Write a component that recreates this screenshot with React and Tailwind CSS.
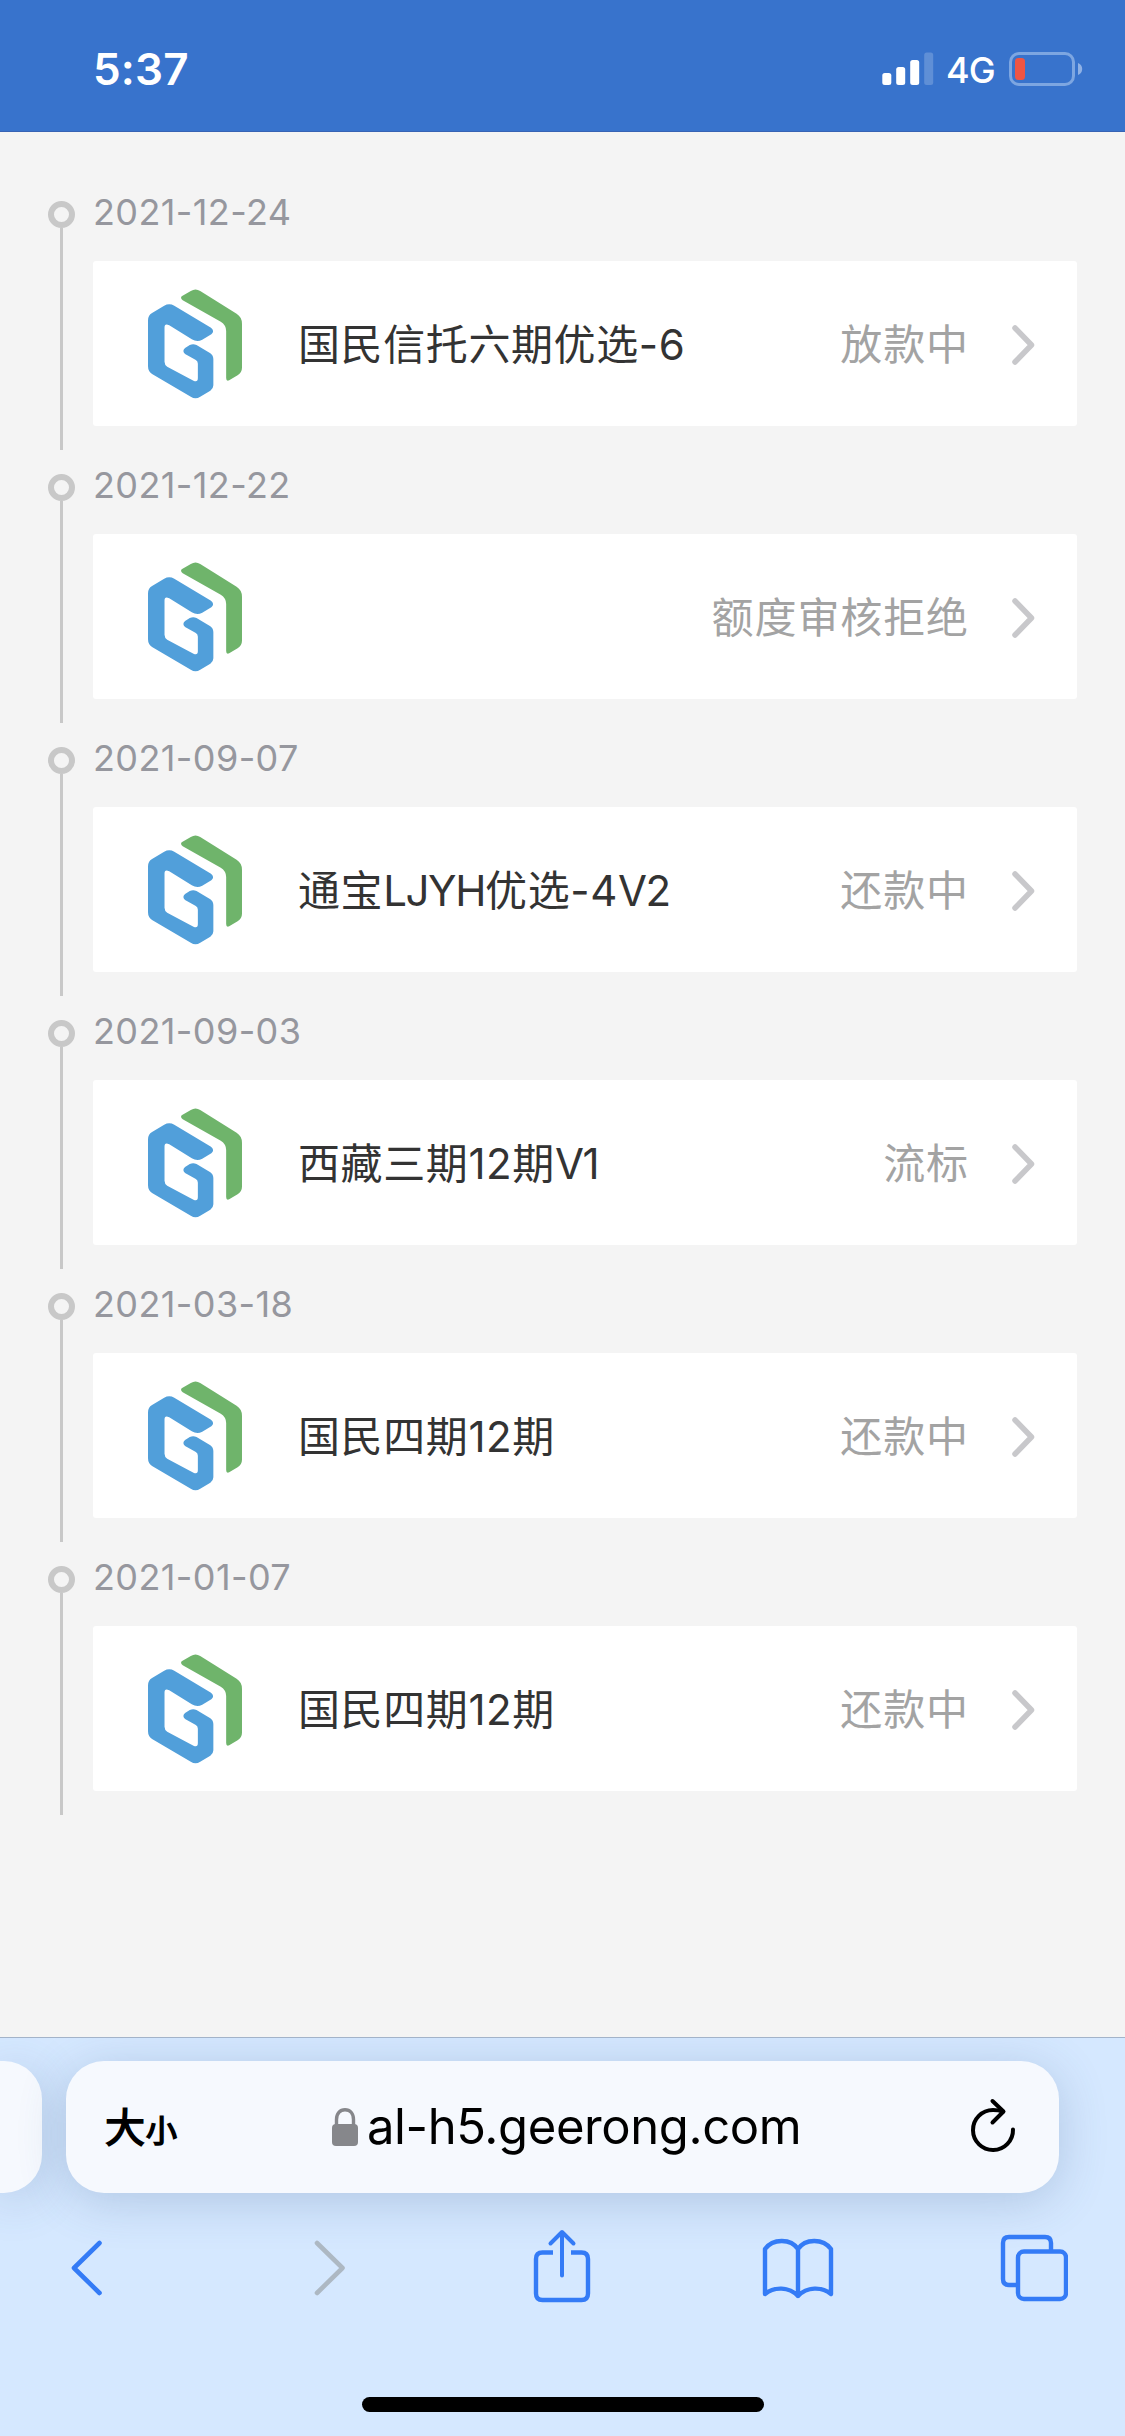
const records = [
  { date: '2021-12-24', title: '国民信托六期优选-6', status: '放款中' },
  { date: '2021-12-22', title: '', status: '额度审核拒绝' },
  { date: '2021-09-07', title: '通宝LJYH优选-4V2', status: '还款中' },
  { date: '2021-09-03', title: '西藏三期12期V1', status: '流标' },
  { date: '2021-03-18', title: '国民四期12期', status: '还款中' },
  { date: '2021-01-07', title: '国民四期12期', status: '还款中' },
];

function StatusBar() {
  return (
    <header className="flex h-[132px] items-start justify-between border-b border-[#3763b4] bg-[#3873cc] pl-[93px] pr-[42px] text-white">
      <span className="mt-[42px] text-[44px] leading-[54px] font-semibold tracking-[0.2px]">5:37</span>
      <div className="mt-[50px] flex h-[38px] items-center">
        <svg width="52" height="34" viewBox="0 0 52 34" fill="currentColor">
          <rect x="0.3" y="21" width="9" height="12" rx="2.5" />
          <rect x="14.2" y="15" width="9" height="18" rx="2.5" />
          <rect x="28.2" y="8" width="9" height="25" rx="2.5" />
          <rect x="42.2" y="0.5" width="9" height="32.5" rx="2.5" opacity="0.2" />
        </svg>
        <span className="ml-[12px] mt-[2px] w-[63px] text-[36px] leading-[38px] font-medium tracking-[-0.8px]">4G</span>
        <svg width="74" height="34" viewBox="0 0 74 34">
          <rect x="1.5" y="1.5" width="63" height="31" rx="8.5" fill="none" stroke="#7da6e1" strokeWidth="3" />
          <rect x="6" y="6" width="10" height="22" rx="3.5" fill="#ee5545" />
          <path d="M69 11v12c2.600-1 4.200-3.200 4.200-6s-1.600-5-4.200-6z" fill="#8fb1e5" />
        </svg>
      </div>
    </header>
  );
}

function Logo() {
  return (
    <svg className="ml-[54px] h-[110px] w-[96px] shrink-0" viewBox="0 0 285 330" preserveAspectRatio="none">
      <path
        fill="#6fb46b"
        d="M103 22L130 6Q144 -3 158 6L266 74Q282 84 282 104V236Q282 250 269 259L244 274Q235 278 235 267V126Q235 108 219 98L106 34Q98 27 103 22Z"
      />
      <path
        fill="#519fda"
        fillRule="evenodd"
        d="M51 50Q66 42 81 50L190 116Q202 127 191 136L164 152Q149 160 133 151L66 109Q52 101 52 116V218Q52 227 60 233L138 275Q151 281 151 267V224Q151 217 145 213L113 195Q103 186 113 177L127 168Q137 163 147 168L188 193Q197 199 197 211V289Q197 299 188 305L158 323Q144 332 130 323L15 255Q3 247 3 232V94Q3 79 15 72Z"
      />
    </svg>
  );
}

// Capital letters are set tighter than the Chinese characters around them
function MixedText({ text }) {
  return text.split(/([A-Z]+)/).map((part, i) => (
    <span key={i} className={i % 2 ? 'tracking-[-1.4px]' : 'tracking-[0.6px]'}>
      {part}
    </span>
  ));
}

function RecordItem({ date, title, status }) {
  return (
    <li className="flex h-[273px] pl-[48px]">
      <div className="flex w-[27px] shrink-0 flex-col items-center pt-[12px]">
        <span className="h-[27px] w-[27px] shrink-0 rounded-full border-[6px] border-[#c8c8c8]" />
        <span className="h-[222px] w-[3px] bg-[#c8c8c8]" />
      </div>
      <div className="ml-[18px] w-[984px]">
        <p className="h-[72px] text-[36px] leading-[46px] tracking-[0.4px] text-[#96979e]">{date}</p>
        <div className="flex h-[165px] items-center rounded-[3px] bg-white pr-[42px]">
          <Logo />
          <span className="ml-[55px] mt-[2px] text-[42px] leading-[60px] text-[#333]">
            <MixedText text={title} />
          </span>
          <span className="ml-auto mt-[2px] text-[42px] leading-[60px] tracking-[0.9px] text-[#a3a3a3]">{status}</span>
          <svg className="ml-[42px] mt-[2px] h-[42px] w-[24px]" viewBox="0 0 24 42" fill="none" stroke="#c8c8cb" strokeWidth="5.500" strokeLinecap="round" strokeLinejoin="round">
            <path d="M4 4L20.500 21L4 38" />
          </svg>
        </div>
      </div>
    </li>
  );
}

function AddressBar() {
  return (
    <div className="flex gap-[24px] pt-[23px]">
      <div className="h-[132px] w-[42px] shrink-0 rounded-r-[38px] bg-[#f6f9fe] shadow-[0_8px_48px_rgba(60,90,140,0.24)]" />
      <div className="flex h-[132px] w-[993px] items-center rounded-[38px] bg-[#f6f9fe] pl-[39px] pr-[42px] text-black shadow-[0_8px_48px_rgba(60,90,140,0.24)]">
        <span className="mt-[5px] flex w-[227px] items-baseline [-webkit-text-stroke:1.6px_black]">
          <span className="text-[40px] leading-[60px]">大</span>
          <span className="ml-px mt-[2px] text-[31px] leading-[60px]">小</span>
        </span>
        <svg width="26" height="38" viewBox="0 0 26 38">
          <path d="M4.500 18V11.500C4.500 5.500 8 1.800 13 1.800S21.500 5.500 21.500 11.500V18" fill="none" stroke="#86878b" strokeWidth="3.400" />
          <rect y="16" width="26" height="22" rx="4" fill="#86878b" />
        </svg>
        <span className="ml-[9px] text-[49px] leading-[60px] tracking-[-0.4px]">al-h5.geerong.com</span>
        <svg className="ml-auto" width="48" height="58" viewBox="0 0 48 58" fill="none" stroke="currentColor" strokeWidth="4" strokeLinecap="round" strokeLinejoin="round">
          <path d="M44 31.500A20 20 0 1 1 24 12C28 12 31 12.500 34 13.500" />
          <path d="M23.500 3L34.500 13.500L23.500 24.500" />
        </svg>
      </div>
    </div>
  );
}

function Toolbar() {
  return (
    <nav className="mt-[35px] flex h-[80px] items-center pl-[70px] text-[#347bf6]">
      <svg width="34" height="80" viewBox="0 0 34 80" fill="none" stroke="currentColor" strokeWidth="4.600" strokeLinecap="round" strokeLinejoin="round">
        <path d="M29.500 15L4 40L29.500 65" />
      </svg>
      <svg className="ml-[209px] text-[#adb8c3]" width="34" height="80" viewBox="0 0 34 80" fill="none" stroke="currentColor" strokeWidth="4.600" strokeLinecap="round" strokeLinejoin="round">
        <path d="M4 15L29.500 40L4 65" />
      </svg>
      <svg className="ml-[186px]" width="58" height="80" viewBox="0 0 58 80" fill="none" stroke="currentColor" strokeWidth="4.400">
        <path d="M20 24.500H9.500Q3 24.500 3 31V65.500Q3 72 9.500 72H48.500Q55 72 55 65.500V31Q55 24.500 48.500 24.500H38" />
        <path d="M29 47.500V4.500M17.500 15.500L29 4L40.500 15.500" strokeWidth="4" strokeLinecap="round" strokeLinejoin="round" />
      </svg>
      <svg className="ml-[171px]" width="72" height="80" viewBox="0 0 72 80" fill="none" stroke="currentColor" strokeWidth="4.400" strokeLinecap="round" strokeLinejoin="round">
        <path d="M36 21C29 10.500 11 10 3 21V66C12 58.500 27 58.500 36 68C45 58.500 60 58.500 69 66V21C61 10 43 10.500 36 21ZM36 21V68" />
      </svg>
      <svg className="ml-[166px]" width="68" height="80" viewBox="0 0 68 80" fill="none" stroke="currentColor" strokeWidth="4.400">
        <path d="M51 23.500V15Q51 9 45 9H9Q3 9 3 15V51Q3 57 9 57H18" />
        <rect x="18" y="23.500" width="48" height="47.500" rx="6" />
      </svg>
    </nav>
  );
}

export default function App() {
  return (
    <div className="flex h-[2436px] w-[1125px] flex-col overflow-hidden bg-[#f4f4f4] font-['Inter','Noto_Sans_CJK_SC',sans-serif]" lang="zh-CN">
      <StatusBar />
      <main className="flex-1">
        <ul className="pt-[57px]">
          {records.map((item) => (
            <RecordItem key={item.date} {...item} />
          ))}
        </ul>
      </main>
      <footer className="flex h-[399px] shrink-0 flex-col overflow-hidden border-t border-[#a3b3c9] bg-[#d5e8ff]">
        <AddressBar />
        <Toolbar />
        <div className="mx-auto mt-[89px] h-[15px] w-[402px] rounded-full bg-black" />
      </footer>
    </div>
  );
}
